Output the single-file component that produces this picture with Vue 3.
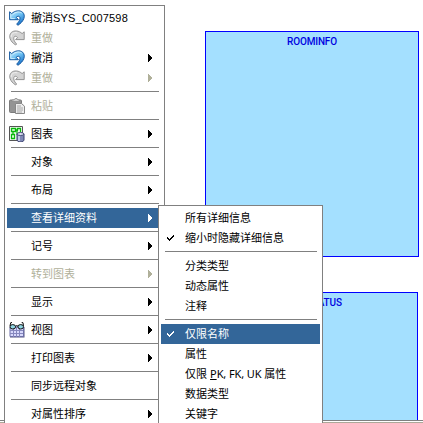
<script setup>
const mainMenu = [
  { text: '撤消', latin: 'SYS_C007598', icon: 'undo' },
  { text: '重做', icon: 'redo', disabled: true },
  { text: '撤消', icon: 'undo', arrow: true },
  { text: '重做', icon: 'redo', disabled: true, arrow: true },
  { sep: true },
  { text: '粘贴', icon: 'paste', disabled: true },
  { sep: true },
  { text: '图表', icon: 'diagram', arrow: true },
  { sep: true },
  { text: '对象', arrow: true },
  { sep: true },
  { text: '布局', arrow: true },
  { sep: true },
  { text: '查看详细资料', arrow: true, active: true },
  { sep: true },
  { text: '记号', arrow: true },
  { sep: true },
  { text: '转到图表', disabled: true, arrow: true },
  { sep: true },
  { text: '显示', arrow: true },
  { sep: true },
  { text: '视图', icon: 'view', arrow: true },
  { sep: true },
  { text: '打印图表', arrow: true },
  { sep: true },
  { text: '同步远程对象' },
  { sep: true },
  { text: '对属性排序', arrow: true }
]

const subMenu = [
  { text: '所有详细信息' },
  { text: '缩小时隐藏详细信息', checked: true },
  { sep: true },
  { text: '分类类型' },
  { text: '动态属性' },
  { text: '注释' },
  { sep: true },
  { text: '仅限名称', checked: true, active: true },
  { text: '属性' },
  { text: '仅限 ', keys: true },
  { text: '数据类型' },
  { text: '关键字' }
]
</script>

<template>
  <main class="screen">
    <section class="entity room">ROOMINFO</section>
    <section class="entity status">ROOMSTATUS</section>
    <div class="edge"></div>

    <nav class="menu main">
      <template v-for="(item, i) in mainMenu" :key="i">
        <hr v-if="item.sep" class="sep" />
        <div v-else class="item" :class="{ disabled: item.disabled, active: item.active }">
          <span class="gutter">
            <svg v-if="item.icon === 'undo'" width="16" height="16" viewBox="0 0 16 16">
              <defs>
                <linearGradient id="blue" x1="0" y1="0" x2="0.6" y2="1">
                  <stop offset="0" stop-color="#d2f1ff" />
                  <stop offset=".5" stop-color="#6cc0f2" />
                  <stop offset="1" stop-color="#1c74cc" />
                </linearGradient>
              </defs>
              <path d="M.6 1.8 2.7 3.6C5.6.6 11 -.1 13.6 2.2c3.4 3.3 1.5 9.3-4.8 13.1L7.7 14c3-2.8 4-5.8 2.8-7.3-1-.9-2.3-.3-3.3.6l2.2 2.4H.6z" fill="url(#blue)" stroke="#17599f" stroke-width="1" stroke-linejoin="round" />
              <path d="M1.8 4.3v4.3h4M3.5 4.8C6.3 1.9 10.4 1.2 12.6 3" fill="none" stroke="#e2f7ff" stroke-width=".8" />
            </svg>
            <svg v-else-if="item.icon === 'redo'" width="16" height="16" viewBox="0 0 16 16">
              <path d="M15.2 1.8 13.1 3.6C10.2.6 5 .1 2.4 2.4-.9 5.7.8 11.5 6.7 15l.9-1C4.8 11.2 4.1 8.2 5.3 6.7c1-.9 2.3-.3 3.3.8L6.6 9.6h8.6z" fill="#d3d3d3" stroke="#939393" stroke-linejoin="round" />
              <path d="M2.2 7.2C1.8 4 4.8 1.9 8.4 2.8" fill="none" stroke="#f0f0f0" />
            </svg>
            <svg v-else-if="item.icon === 'paste'" width="16" height="16" viewBox="0 0 16 16">
              <rect x=".5" y="2" width="12" height="12.5" rx="1" fill="#949494" stroke="#7c7c7c" />
              <path d="M3 3.5V2h2l1-1.5h2L9 2h1.5v1.5z" fill="#cfcfcf" stroke="#858585" stroke-width=".7" />
              <path d="M6.5 5.5h6l3 2.7v7.3h-9z" fill="#ececec" stroke="#888" />
              <path d="M8 8h4M8 10h6M8 12h6M8 14h5" stroke="#9b9b9b" stroke-width=".8" />
            </svg>
            <svg v-else-if="item.icon === 'diagram'" width="16" height="16" viewBox="0 0 16 16">
              <path d="M.5.5h13v14H.5z" fill="#f4fff4" stroke="#555" />
              <path d="M2.5 2.5h4v3h-4zM8.5 5V2.5h3V6M2.5 8.5h3v4h-3zM4 6v2M6 4h2v4h3" fill="none" stroke="#08b80c" stroke-width="1.3" />
              <path d="M8 8v6c0 2.4 7 2.4 7 0V8z" fill="#8089b6" stroke="#39406f" />
              <path d="M10 9v6" stroke="#d9def4" stroke-width="1.5" />
              <ellipse cx="11.5" cy="8" rx="3.5" ry="1.5" fill="#dce0f1" stroke="#454c78" />
            </svg>
            <svg v-else-if="item.icon === 'view'" width="16" height="16" viewBox="0 0 16 16">
              <path d="M1 5h14.5v10.5H1z" fill="#555681" />
              <path d="M1 5h13.5v9.5H1z" fill="#d7d8fb" stroke="#6d6fa7" />
              <path d="M1 8.5h13M1 11.5h13M4.5 5v10M7.5 5v10M10.5 5v10" stroke="#8587bd" stroke-width="1" />
              <path d="M1 4 1.7.7 3 .5M14.5 4 14 .7 12.7.5M6.5 4.2q1.3-1.2 2.5 0" fill="none" stroke="#111" />
              <ellipse cx="3.8" cy="4.8" rx="2.8" ry="2.2" fill="#90d6e3" stroke="#111" />
              <ellipse cx="11.7" cy="4.8" rx="2.8" ry="2.2" fill="#90d6e3" stroke="#111" />
            </svg>
          </span>
          <span class="label">{{ item.text }}<span v-if="item.latin" class="code">{{ item.latin }}</span></span>
          <svg v-if="item.arrow" class="arrow" width="5" height="8" viewBox="0 0 5 8" shape-rendering="crispEdges">
            <path d="M0 0h1v1h1v1h1v1h1v2H3v1H2v1H1v1H0z" fill="currentColor" />
          </svg>
        </div>
      </template>
    </nav>

    <nav class="menu sub">
      <template v-for="(item, i) in subMenu" :key="i">
        <hr v-if="item.sep" class="sep" />
        <div v-else class="item" :class="{ active: item.active }">
          <span class="gutter">
            <svg v-if="item.checked" class="check" width="7" height="7" viewBox="0 0 7 7" shape-rendering="crispEdges">
              <path d="M6 0h1v2H6v1H5v1H4v1H3v1H2V5H1V4H0V2h1v1h1v1h1V3h1V2h1V1h1z" fill="currentColor" />
            </svg>
          </span>
          <span class="label">{{ item.text }}<span v-if="item.keys" class="keys"><u>P</u>K, FK, UK </span><template v-if="item.keys">属性</template></span>
        </div>
      </template>
    </nav>
  </main>
</template>

<style>
body {
  margin: 0;
  background: #fff;
}
</style>

<style scoped>
.screen {
  position: relative;
  width: 423px;
  height: 423px;
  overflow: hidden;
  background: #fff;
  font: 11px/20px "Liberation Sans", "Noto Sans CJK SC", sans-serif;
  color: #000;
}
.entity {
  position: absolute;
  box-sizing: border-box;
  left: 205px;
  border: 1px solid #00f;
  background: #a4e0ff;
  color: #0000e0;
  font: 500 10px/20px Roboto, sans-serif;
  letter-spacing: -.15px;
  text-align: center;
}
.room {
  top: 31px;
  width: 214px;
  height: 226px;
}
.status {
  top: 292px;
  width: 213px;
  height: 140px;
  padding-right: 3px;
}
.edge {
  position: absolute;
  left: 0;
  top: 420px;
  width: 423px;
  height: 3px;
  box-sizing: border-box;
  border-top: 1px solid #808080;
  border-bottom: 1px solid #aca899;
  background: #fff;
}
.menu {
  position: absolute;
  box-sizing: border-box;
  border: 1px solid #808080;
  padding: 2px;
  background: #fff;
}
.main {
  left: 4px;
  top: 5px;
  width: 161px;
  height: 440px;
}
.sub {
  left: 158px;
  top: 205px;
  width: 165px;
  height: 240px;
}
.sep {
  height: 1px;
  margin: 3px 3px 4px 4px;
  border: 0;
  background: #808080;
}
.item {
  display: flex;
  align-items: center;
  height: 20px;
  white-space: nowrap;
}
.gutter {
  display: flex;
  flex: none;
  align-items: center;
  width: 22px;
  padding-left: 2px;
}
.sub .gutter {
  width: 18px;
  padding-left: 6px;
}
.check {
  margin-top: 1px;
}
.label {
  flex: 1;
}
.code {
  letter-spacing: .2px;
}
.keys {
  font-family: "Noto Sans", sans-serif;
  letter-spacing: -.1px;
}
.arrow {
  flex: none;
  margin-right: 9px;
}
.disabled {
  color: #b0b09a;
}
.active {
  background: #336699;
  color: #fff;
}
</style>
